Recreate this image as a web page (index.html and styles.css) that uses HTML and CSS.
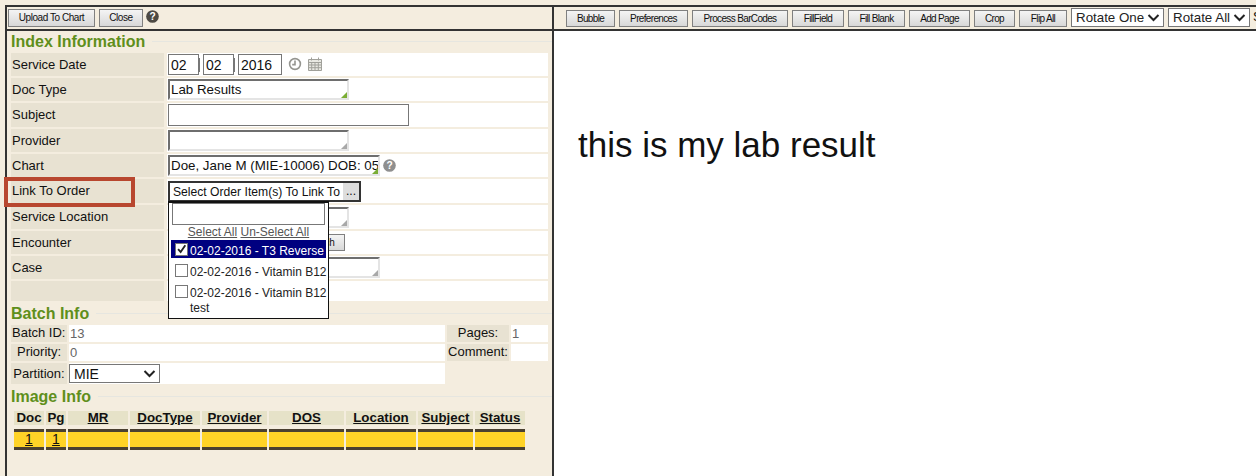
FILE: index.html
```html
<!DOCTYPE html>
<html lang="en">
<head>
<meta charset="utf-8">
<title>Index Information</title>
<link rel="stylesheet" href="styles.css">
</head>
<body>
<div class="app">
  <section class="left">
    <div class="toolbar left-toolbar">
      <button class="btn upload">Upload To Chart</button>
      <button class="btn close">Close</button>
      <svg class="help dark" viewBox="0 0 14 14"><circle cx="7" cy="7" r="6.8"/><text x="7" y="11" text-anchor="middle">?</text></svg>
    </div>
    <div class="legend first"><h2>Index Information</h2><span class="rule"></span></div>
    <div class="form">
      <div class="label">Service Date</div>
      <div class="value date">
        <span class="input w31">02</span><i class="dash"></i><span class="input w31">02</span><i class="dash"></i><span class="input w44">2016</span>
        <svg class="clock" viewBox="0 0 14 14"><circle cx="7" cy="7" r="5.4"/><path d="M7 3.6V7.6H4.2"/></svg>
        <svg class="cal" viewBox="0 0 14 14"><path d="M.5 2.5h13v11H.5zM.5 5.5h13M.5 8h13M.5 10.7h13M3.7 5.5v8M7 5.5v8M10.3 5.5v8M3.5 .5v3M10.5 .5v3"/></svg>
      </div>
      <div class="label">Doc Type</div>
      <div class="value"><span class="combo w181 green">Lab Results</span></div>
      <div class="label">Subject</div>
      <div class="value"><span class="input w241"></span></div>
      <div class="label">Provider</div>
      <div class="value"><span class="combo w181"></span></div>
      <div class="label">Chart</div>
      <div class="value chart"><span class="combo w212 green clip">Doe, Jane M (MIE-10006) DOB: 05/05/1970</span>
        <svg class="help light" viewBox="0 0 14 14"><circle cx="7" cy="7" r="6.8"/><text x="7" y="11" text-anchor="middle">?</text></svg></div>
      <div class="label">Link To Order</div>
      <div class="value"><span class="picker"><span class="picker-text">Select Order Item(s) To Link To</span><span class="dots">...</span></span></div>
      <div class="label">Service Location</div>
      <div class="value"><span class="combo w181"></span></div>
      <div class="label">Encounter</div>
      <div class="value"><button class="btn search">Search</button></div>
      <div class="label">Case</div>
      <div class="value"><span class="combo w212"></span></div>
      <div class="label"></div>
      <div class="value"></div>
    </div>
    <div class="legend"><h2>Batch Info</h2><span class="rule"></span></div>
    <div class="batch-grid">
      <div class="label b-label">Batch ID:</div><div class="value b-val">13</div>
      <div class="label c-label">Pages:</div><div class="value b-val">1</div>
      <div class="label c-label">Priority:</div><div class="value b-val">0</div>
      <div class="label c-label">Comment:</div><div class="value b-val"></div>
      <div class="label c-label">Partition:</div>
      <div class="value"><span class="select partition">MIE<svg class="chev" viewBox="0 0 12 8"><path d="M1 1l5 5 5-5"/></svg></span></div>
    </div>
    <div class="legend"><h2>Image Info</h2><span class="rule"></span></div>
    <div class="img-table">
      <div class="th plain">Doc</div><div class="th plain">Pg</div><div class="th">MR</div><div class="th">DocType</div><div class="th">Provider</div><div class="th">DOS</div><div class="th">Location</div><div class="th">Subject</div><div class="th">Status</div>
      <div class="td"><u>1</u></div><div class="td"><u>1</u></div><div class="td"></div><div class="td"></div><div class="td"></div><div class="td"></div><div class="td"></div><div class="td"></div><div class="td"></div>
    </div>
    <div class="highlight"></div>
    <div class="dropdown">
      <span class="input filter"></span>
      <div class="links"><u>Select All</u> <u>Un-Select All</u></div>
      <div class="opt selected"><span class="box"><svg viewBox="0 0 13 13"><path d="M2.5 6l3 3.5L11 1.5"/></svg></span><span class="opt-text">02-02-2016 - T3 Reverse</span></div>
      <div class="opt"><span class="box"></span><span class="opt-text">02-02-2016 - Vitamin B12</span></div>
      <div class="opt"><span class="box"></span><span class="opt-text">02-02-2016 - Vitamin B12 test</span></div>
    </div>
  </section>
  <section class="right">
    <div class="toolbar right-toolbar">
      <button class="btn tool w49">Bubble</button>
      <button class="btn tool w69">Preferences</button>
      <button class="btn tool w96">Process BarCodes</button>
      <button class="btn tool w52">FillField</button>
      <button class="btn tool w57">Fill Blank</button>
      <button class="btn tool w61">Add Page</button>
      <button class="btn tool w41">Crop</button>
      <button class="btn tool w48">Flip All</button>
      <span class="select rot one">Rotate One<svg class="chev" viewBox="0 0 12 8"><path d="M1 1l5 5 5-5"/></svg></span>
      <span class="select rot all">Rotate All<svg class="chev" viewBox="0 0 12 8"><path d="M1 1l5 5 5-5"/></svg></span>
      <span class="cut">S</span>
    </div>
    <div class="doc-view">this is my lab result</div>
  </section>
</div>
</body>
</html>
```
FILE: styles.css
```css
* { box-sizing: border-box; }
html, body { margin: 0; height: 476px; overflow: hidden; }
body { background: #f4eddf; font: 13px/16px "Liberation Sans", Arial, sans-serif; color: #111; }
.app { display: flex; margin: 5px 0 0 5px; border-top: 2px solid #333; height: 471px; }
.left { position: relative; width: 547px; flex: none; border-left: 2px solid #333; }
.right { flex: 1; min-width: 0; border-left: 2px solid #333; overflow: hidden; }
.toolbar { height: 24px; border-bottom: 2px solid #333; display: flex; align-items: flex-start; }
.left-toolbar { padding: 2px 0 0 1px; }
.btn { height: 18px; padding: 0; border: 1px solid #808080; background: linear-gradient(#f4f4f4, #d8d8d8); font: 10px/14px "Liberation Sans", Arial, sans-serif; letter-spacing: -.45px; color: #111; text-align: center; white-space: nowrap; }
.upload { width: 87px; }
.close { width: 44px; margin-left: 4px; }
.help { width: 13px; height: 13px; flex: none; }
.help.dark { margin: 1px 0 0 3px; }
.help.dark circle { fill: #4d4a44; }
.help.light circle { fill: #8f8f8f; }
.help text { fill: #fff; font: bold 11px "Liberation Sans", Arial, sans-serif; }
.legend { display: flex; align-items: center; gap: 7px; height: 24px; padding: 1px 0 0 4px; }
.legend.first { height: 22px; padding: 0 0 1px 4px; }
.legend h2 { margin: 0; font: bold 16px/20px "Liberation Sans", Arial, sans-serif; color: #5f8f1b; white-space: nowrap; }
.rule { flex: 1; height: 1px; background: #e6e6e0; }
.form { display: grid; grid-template-columns: 153px 381px; column-gap: 3px; grid-template-rows: 23px 23px 24px 23px 23px 24px 24px 23px 23px 20px; row-gap: 2px; margin-left: 4px; }
.label { background: #e8e2d2; padding-left: 1px; line-height: 23px; white-space: nowrap; }
.value { background: #fff; display: flex; align-items: center; min-width: 0; }
.input { display: block; flex: none; height: 21px; border: 1px solid #777; background: #fff; padding: 2px 1px 0 2px; line-height: 16px; font-size: 14px; }
.w31 { width: 31px; }
.w44 { width: 44px; }
.w241 { width: 241px; height: 22px; margin-left: 1px; }
.dash { width: 4px; height: 14px; border-left: 1px solid #777; }
.date { padding-left: 1px; }
.clock { width: 14px; height: 14px; margin: -2px 0 0 6px; fill: none; stroke: #959590; stroke-width: 1.6; }
.cal { width: 14px; height: 14px; margin: -2px 0 0 6px; fill: #e8e8e2; stroke: #a0a09a; stroke-width: 1; }
.combo { position: relative; display: block; flex: none; height: 21px; margin-left: 1px; border: 2px solid #6e6e6e; border-right-color: #e4e4e4; border-bottom-color: #e4e4e4; background: #fff; padding-left: 1px; line-height: 18px; font-size: 13.33px; white-space: nowrap; overflow: hidden; }
.combo::after { content: ""; position: absolute; right: 0; bottom: 0; border-style: solid; border-width: 0 0 6px 6px; border-color: transparent transparent #a8a8a8 transparent; }
.combo.green::after { border-color: transparent transparent #7aad34 transparent; }
.w181 { width: 181px; }
.w212 { width: 212px; }
.picker { display: flex; align-items: center; width: 193px; height: 21px; margin: 1px 0 0 1px; border: 2px solid #333; background: #fff; font-size: 12.15px; padding-left: 3px; }
.picker-text { flex: 1; white-space: nowrap; }
.dots { width: 16px; height: 17px; background: #ddd; text-align: center; line-height: 16px; }
.chart .help { margin-left: 3px; }
.search { width: 52px; height: 17px; margin-left: 126px; letter-spacing: 0; }
.batch-grid { display: grid; grid-template-columns: 56px 376px 62px 37px; column-gap: 2px; row-gap: 2px; grid-template-rows: 17px 17px 21px; margin-left: 4px; }
.b-label { padding-left: 1px; line-height: 16px; }
.c-label { text-align: center; padding-left: 0; line-height: 16px; }
.batch-grid .label:nth-last-child(2) { line-height: 21px; }
.b-val { color: #666; padding-left: 1px; }
.select { position: relative; display: flex; align-items: center; background: #fff; border: 1px solid #777; white-space: nowrap; }
.partition { width: 91px; height: 19px; padding-left: 4px; font-size: 14px; }
.chev { position: absolute; right: 3px; top: 50%; width: 13px; height: 8px; margin-top: -4px; fill: none; stroke: #222; stroke-width: 2; }
.img-table { display: grid; grid-template-columns: 30px 20px 60px 70px 65px 75px 70px 55px 50px; column-gap: 2px; grid-template-rows: 14px 21px; row-gap: 4px; margin: 3px 0 0 7px; }
.th { background: #e6e2c8; font-weight: bold; font-size: 13.33px; text-align: center; text-decoration: underline; line-height: 14px; white-space: nowrap; }
.th.plain { text-decoration: none; }
.td { background: #ffd327; border-top: 3px solid #4a4030; border-bottom: 3px solid #4a4030; text-align: center; line-height: 15px; font-size: 14px; }
.highlight { position: absolute; left: -3px; top: 170px; width: 131px; height: 30px; border: 4px solid #b8472f; }
.dropdown { position: absolute; left: 161px; top: 194px; width: 161px; background: #fff; border: 1px solid #111; border-top-width: 2px; padding: 0 2px 2px; font-size: 12px; }
.filter { width: 153px; height: 22px; margin-left: 1px; }
.links { text-align: center; color: #555; line-height: 14px; height: 15px; }
.opt { display: flex; gap: 2px; padding-left: 4px; min-height: 21px; align-items: flex-start; color: #222; line-height: 15px; }
.opt-text { padding-top: 4px; margin-right: -4px; }
.opt.selected { background: #000080; color: #fff; min-height: 18px; height: 18px; margin-bottom: 3px; white-space: nowrap; }
.box { flex: none; width: 13px; height: 13px; border: 1px solid #777; background: #fff; margin-top: 3px; }
.box svg { display: block; width: 11px; height: 11px; fill: none; stroke: #222; stroke-width: 2.2; }
.right-toolbar { gap: 4px; padding: 3px 0 0 12px; white-space: nowrap; overflow: hidden; }
.tool { flex: none; height: 17px; letter-spacing: -.65px; }
.w49 { width: 49px; }
.w69 { width: 69px; }
.w96 { width: 96px; }
.w52 { width: 52px; }
.w57 { width: 57px; }
.w61 { width: 61px; }
.w41 { width: 41px; }
.w48 { width: 48px; }
.rot { flex: none; height: 19px; margin-top: -2px; padding-left: 4px; font-size: 13.33px; color: #222; letter-spacing: 0; }
.one { width: 93px; }
.all { width: 82px; margin-right: -1px; }
.cut { flex: none; margin-top: -1px; }
.doc-view { background: #fff; height: 445px; padding: 93px 0 0 24px; font-size: 35px; line-height: 42px; color: #111; }
```
